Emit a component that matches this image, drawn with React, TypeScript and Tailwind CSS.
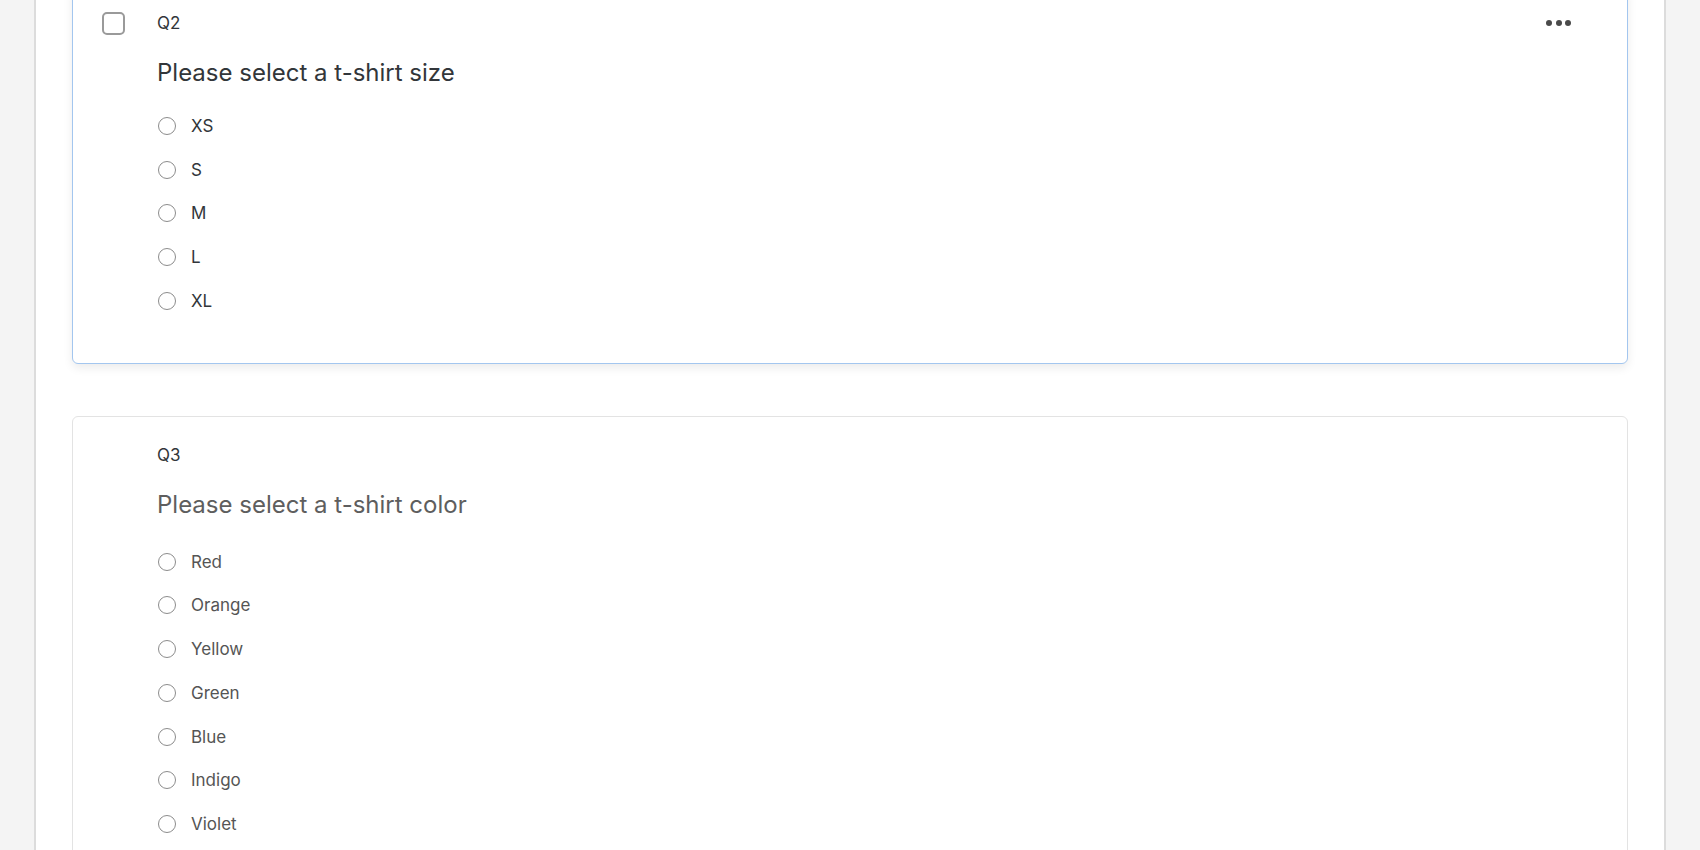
import React from "react";

const font = { fontFamily: "Inter, 'Liberation Sans', sans-serif" };

function Radio({ label, muted }: { label: string; muted?: boolean }) {
  return (
    <div className="flex h-[43.75px] items-center">
      <span className="ml-[1px] box-border block h-[18px] w-[18px] rounded-full border-[1.5px] border-[#8c8c8c] bg-white" />
      <span
        className={`ml-[15px] text-[17px] leading-[20px] ${muted ? "text-[#555555]" : "text-[#32363a]"}`}
      >
        {label}
      </span>
    </div>
  );
}

export default function App() {
  const sizes = ["XS", "S", "M", "L", "XL"];
  const colors = ["Red", "Orange", "Yellow", "Green", "Blue", "Indigo", "Violet"];
  return (
    <div className="h-[850px] w-full overflow-hidden bg-[#f4f4f4]" style={font}>
      <div className="mx-[34px] flex min-h-full flex-col border-x-2 border-[#dcdcdc] bg-white px-[36px]">
        {/* Q2 card (selected) */}
        <div className="-mt-[16px] flex rounded-[6px] border-[1.5px] border-[#a3c6ef] bg-white pb-[40px] pt-[26px] shadow-[0_4px_10px_rgba(0,0,0,0.08)]">
          <div className="w-[84px] shrink-0 pl-[29px]">
            <div className="flex h-[24px] items-center">
              <span className="box-border block h-[23px] w-[23px] rounded-[5px] border-2 border-[#9a9a9a] bg-white" />
            </div>
          </div>
          <div className="flex-1 pr-[56px]">
            <div className="flex h-[24px] items-center justify-between">
              <span className="text-[17px] leading-[24px] text-[#32363a]">Q2</span>
              <span className="flex items-center gap-[3.5px]">
                <span className="block h-[6px] w-[6px] rounded-full bg-[#4a4a4a]" />
                <span className="block h-[6px] w-[6px] rounded-full bg-[#4a4a4a]" />
                <span className="block h-[6px] w-[6px] rounded-full bg-[#4a4a4a]" />
              </span>
            </div>
            <div className="mt-[22px] h-[32px] text-[24px] leading-[32px] text-[#32363a]">
              Please select a t-shirt size
            </div>
            <div className="mt-[15px]">
              {sizes.map((s) => (
                <Radio key={s} label={s} />
              ))}
            </div>
          </div>
        </div>

        {/* Q3 card */}
        <div className="mt-[52px] flex rounded-[6px] border border-[#e3e3e3] bg-white pb-[60px] pt-[26px]">
          <div className="w-[84px] shrink-0" />
          <div className="flex-1">
            <div className="flex h-[24px] items-center">
              <span className="text-[17px] leading-[24px] text-[#32363a]">Q3</span>
            </div>
            <div className="mt-[22px] h-[32px] text-[24px] leading-[32px] text-[#5e5e5e]">
              Please select a t-shirt color
            </div>
            <div className="mt-[19px]">
              {colors.map((c) => (
                <Radio key={c} label={c} muted />
              ))}
            </div>
          </div>
        </div>
      </div>
    </div>
  );
}
